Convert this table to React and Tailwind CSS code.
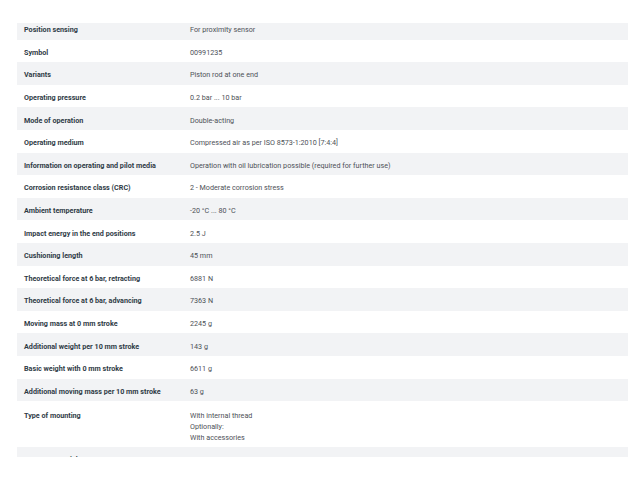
const rows = [
  ["Position sensing", ["For proximity sensor"]],
  ["Symbol", ["00991235"]],
  ["Variants", ["Piston rod at one end"]],
  ["Operating pressure", ["0.2 bar ... 10 bar"]],
  ["Mode of operation", ["Double-acting"]],
  ["Operating medium", ["Compressed air as per ISO 8573-1:2010 [7:4:4]"]],
  ["Information on operating and pilot media", ["Operation with oil lubrication possible (required for further use)"]],
  ["Corrosion resistance class (CRC)", ["2 - Moderate corrosion stress"]],
  ["Ambient temperature", ["-20 °C ... 80 °C"]],
  ["Impact energy in the end positions", ["2.5 J"]],
  ["Cushioning length", ["45 mm"]],
  ["Theoretical force at 6 bar, retracting", ["6881 N"]],
  ["Theoretical force at 6 bar, advancing", ["7363 N"]],
  ["Moving mass at 0 mm stroke", ["2245 g"]],
  ["Additional weight per 10 mm stroke", ["143 g"]],
  ["Basic weight with 0 mm stroke", ["6611 g"]],
  ["Additional moving mass per 10 mm stroke", ["63 g"]],
  ["Type of mounting", ["With internal thread", "Optionally:", "With accessories"]],
  ["Note on materials", ["RoHS-compliant"]],
];

export default function App() {
  return (
    <div
      className="w-[640px] h-[457px] overflow-hidden bg-white pt-[23px] pl-[17px] pr-[12px] text-[7.2px] leading-[11px]"
      style={{ fontFamily: "Roboto, 'Liberation Sans', sans-serif" }}
    >
      <div className="flex flex-col">
        {rows.map(([label, values], i) => (
          <div
            key={label}
            className={
              "flex " +
              (i % 2 === 0 ? "bg-[#f2f3f5] " : "bg-white ") +
              (i === 0 ? "pt-[1.3px] pb-[4.3px]" : values.length > 1 ? "pt-[8.5px] pb-[4px]" : "pt-[7.3px] pb-[4.3px]")
            }
          >
            <div className="w-[173px] shrink-0 pl-[7px] font-bold text-[#2f3b46]">{label}</div>
            <div className="flex flex-col text-[#4d5157]">
              {values.map((v) => (
                <div key={v}>{v}</div>
              ))}
            </div>
          </div>
        ))}
      </div>
    </div>
  );
}
